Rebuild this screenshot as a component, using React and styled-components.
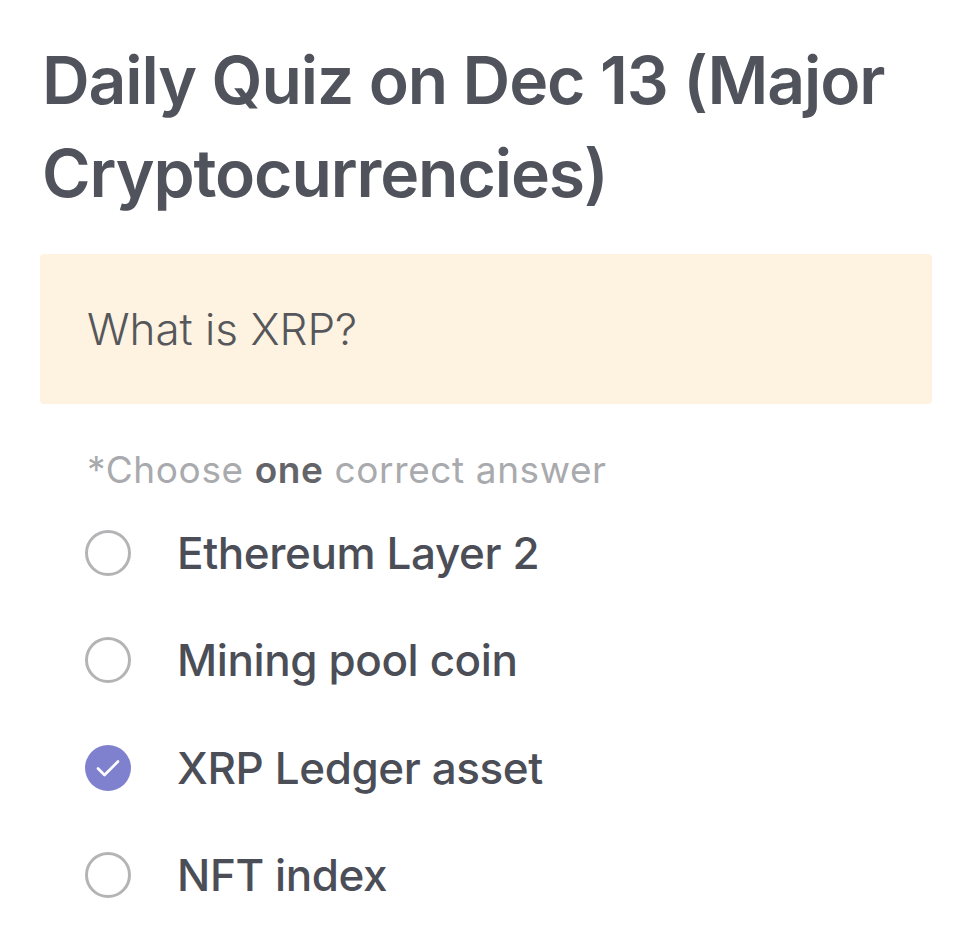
import React from "react";
import styled, { createGlobalStyle } from "styled-components";

const GlobalStyle = createGlobalStyle`
  html, body {
    margin: 0;
    padding: 0;
    background: #ffffff;
  }
  body {
    font-family: Inter, "Noto Sans", sans-serif;
    -webkit-font-smoothing: antialiased;
  }
`;

const Page = styled.div`
  width: 973px;
  padding: 34px 41px 0 40px;
  box-sizing: border-box;
`;

const Title = styled.h1`
  margin: 0 0 0 2px;
  font-size: 66px;
  font-weight: 600;
  line-height: 93px;
  letter-spacing: -1.1px;
  color: #50535c;
`;

const QuestionBox = styled.div`
  margin-top: 34px;
  height: 150px;
  background: #fef2e1;
  border-radius: 4px;
  display: flex;
  align-items: center;
  padding: 0 47px;
`;

const QuestionText = styled.p`
  margin: 0;
  font-size: 44px;
  font-weight: 300;
  color: #56575b;
`;

const Hint = styled.p`
  margin: 43px 0 0 47px;
  font-size: 37px;
  font-weight: 400;
  letter-spacing: 0.6px;
  color: #a9aaad;

  b {
    font-weight: 600;
    color: #626469;
  }
`;

const Options = styled.ul`
  list-style: none;
  margin: 7px 0 0 0;
  padding: 0 0 0 45px;
  display: flex;
  flex-direction: column;
`;

const Option = styled.li`
  height: 107.5px;
  display: flex;
  align-items: center;
  gap: 46px;
`;

const Radio = styled.span`
  width: 46px;
  height: 46px;
  box-sizing: border-box;
  border-radius: 50%;
  flex-shrink: 0;
  display: flex;
  align-items: center;
  justify-content: center;
  border: ${(p) => (p.checked ? "none" : "3px solid #b4b4b6")};
  background: ${(p) => (p.checked ? "#7f81cf" : "transparent")};
`;

const Label = styled.span`
  font-size: 44px;
  font-weight: 500;
  color: #4b4e57;
  letter-spacing: -0.4px;
`;

const options = [
  { label: "Ethereum Layer 2" },
  { label: "Mining pool coin" },
  { label: "XRP Ledger asset", checked: true },
  { label: "NFT index" },
];

export default function App() {
  return (
    <>
      <GlobalStyle />
      <Page>
        <Title>
          Daily Quiz on Dec 13 (Major
          <br />
          Cryptocurrencies)
        </Title>
        <QuestionBox>
          <QuestionText>What is XRP?</QuestionText>
        </QuestionBox>
        <Hint>
          *Choose <b>one</b> correct answer
        </Hint>
        <Options>
          {options.map((o) => (
            <Option key={o.label}>
              <Radio checked={o.checked}>
                {o.checked && (
                  <svg width="26" height="26" viewBox="0 0 26 26" fill="none">
                    <path
                      d="M3 13.5l6.5 6.5L23 6.5"
                      stroke="#ffffff"
                      strokeWidth="2.6"
                      strokeLinecap="round"
                      strokeLinejoin="round"
                    />
                  </svg>
                )}
              </Radio>
              <Label>{o.label}</Label>
            </Option>
          ))}
        </Options>
      </Page>
    </>
  );
}
